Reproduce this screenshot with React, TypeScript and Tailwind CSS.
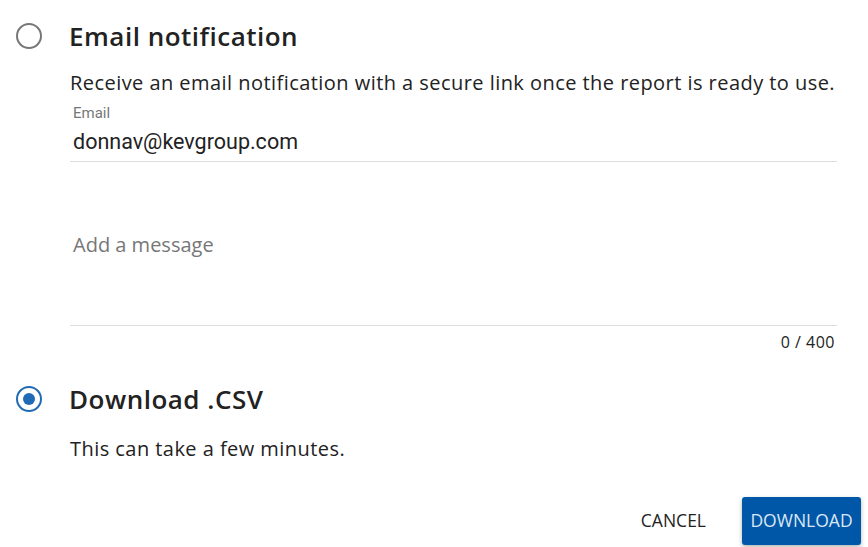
export default function App() {
  const sans = { fontFamily: '"Open Sans", "Noto Sans", sans-serif' };
  return (
    <div className="w-[868px] h-[547px] bg-white overflow-hidden text-[#222]" style={sans}>
      <div className="flex flex-col pl-[16px] pr-[31px]">
        {/* email option */}
        <div className="flex items-center gap-[27px] pt-[23px] h-[49px]">
          <span className="w-[26px] h-[26px] rounded-full border-2 border-[#777] shrink-0" />
          <span className="text-[26px] font-semibold leading-none tracking-[0.5px]">Email notification</span>
        </div>
        <div className="pl-[54px]">
          <p className="text-[20px] leading-none mt-[24px] tracking-[0.45px]">
            Receive an email notification with a secure link once the report is ready to use.
          </p>
          <div className="border-b border-[#ddd] pl-[3px] mt-[13px] pb-[8px]" style={{ fontFamily: 'Roboto, sans-serif' }}>
            <div className="text-[15px] text-[#777] leading-none">Email</div>
            <div className="text-[21.5px] leading-none mt-[10px] text-[#222]">donnav@kevgroup.com</div>
          </div>
          <div className="border-b border-[#ddd] h-[164px] pl-[3px] pt-[72px]">
            <span className="text-[20px] text-[#777] leading-none">Add a message</span>
          </div>
          <div className="text-right text-[16px] leading-none mt-[8px] pr-[2px] tracking-[0.5px]">0 / 400</div>
        </div>

        {/* download option */}
        <div className="flex items-center gap-[27px] mt-[36px]">
          <span className="w-[26px] h-[26px] rounded-full border-2 border-[#1f6bb5] shrink-0 flex items-center justify-center">
            <span className="w-[12px] h-[12px] rounded-full bg-[#1f6bb5]" />
          </span>
          <span className="text-[26px] font-semibold leading-none tracking-[0.5px]">Download .CSV</span>
        </div>
        <p className="pl-[54px] text-[20px] leading-none mt-[27px] tracking-[0.45px]">This can take a few minutes.</p>

        <div className="flex justify-end items-center gap-[16px] mt-[38px] -mr-[24px]">
          <button className="text-[17.5px] text-[#222] px-[20px] h-[48px]">CANCEL</button>
          <button className="text-[17.5px] text-[#dbe7f5] bg-[#0057a8] rounded-[3px] w-[119px] h-[48px] shadow-[0_2px_4px_rgba(0,0,0,0.3)]">
            DOWNLOAD
          </button>
        </div>
      </div>
    </div>
  );
}
